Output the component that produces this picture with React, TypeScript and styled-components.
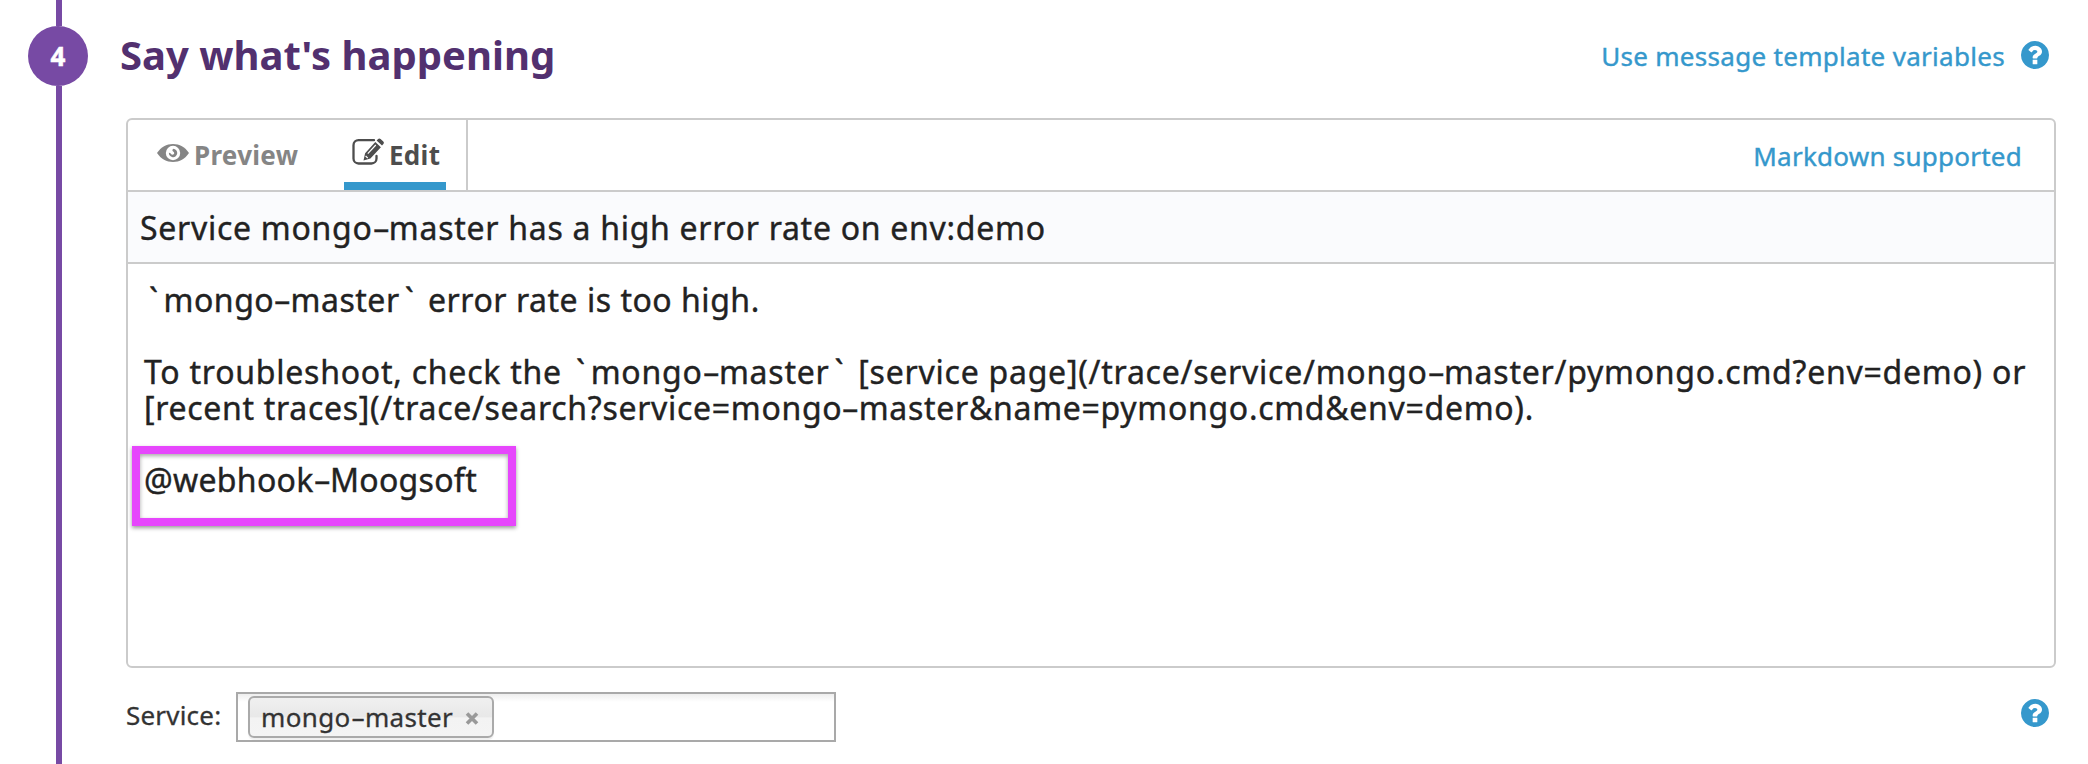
import React from "react";
import styled, { createGlobalStyle } from "styled-components";

const Global = createGlobalStyle`
  * { box-sizing: border-box; }
  body { margin: 0; background: #fff; font-family: "Noto Sans", "Open Sans", sans-serif; }
`;

const Page = styled.main`
  display: flex;
  height: 764px;
  overflow: hidden;
  background: #fff;
`;

const Rail = styled.aside`
  flex: 0 0 126px;
  display: flex;
  flex-direction: column;
  align-items: center;
  padding-right: 10px;
`;

const RailLine = styled.div<{ $height?: number }>`
  width: 6px;
  height: ${(p) => (p.$height ? `${p.$height}px` : "auto")};
  flex: ${(p) => (p.$height ? "none" : "1")};
  margin-left: 2px;
  background: #774aa4;
`;

const StepBadge = styled.div`
  flex: none;
  width: 60px;
  height: 60px;
  border-radius: 50%;
  background: #774aa4;
  color: #fff;
  font-size: 26px;
  font-weight: 700;
  -webkit-text-stroke: 0.5px;
  line-height: 61px;
  text-align: center;
`;

const Content = styled.section`
  flex: none;
  width: 1930px;
  display: flex;
  flex-direction: column;
`;

const Header = styled.header`
  height: 118px;
  display: flex;
  align-items: flex-start;
  justify-content: space-between;
  padding: 26px 7px 0 0;
`;

const Heading = styled.h2`
  margin: 0 0 0 -6px;
  color: #52306f;
  font-size: 40px;
  font-weight: 700;
  line-height: 58px;
  white-space: nowrap;
`;

const HeaderLink = styled.div`
  display: flex;
  align-items: flex-start;
  gap: 16px;
  padding-top: 15px;
`;

const Link = styled.a<{ $spacing: number; $lineHeight: number }>`
  color: #3598cc;
  font-size: 26px;
  letter-spacing: ${(p) => p.$spacing}px;
  line-height: ${(p) => p.$lineHeight}px;
  -webkit-text-stroke: 0.4px;
  white-space: nowrap;
`;

const HelpSvg = styled.svg`
  flex: none;
  display: block;
  width: 28px;
  height: 28px;
  fill: #3598cc;
`;

const Editor = styled.div`
  height: 550px;
  border: 2px solid #cbcbcb;
  border-radius: 6px;
  display: flex;
  flex-direction: column;
  overflow: hidden;
`;

const TabBar = styled.div`
  flex: none;
  height: 72px;
  display: flex;
  justify-content: space-between;
  border-bottom: 2px solid #cbcbcb;
  padding-right: 32px;
`;

const Tabs = styled.div`
  display: flex;
  border-right: 2px solid #cbcbcb;
  width: 340px;
  padding-left: 21px;
`;

const Tab = styled.div<{ $active?: boolean }>`
  display: flex;
  align-items: flex-start;
  width: ${(p) => (p.$active ? 102 : 152)}px;
  margin-left: ${(p) => (p.$active ? 43 : 0)}px;
  padding-left: 8px;
  border-bottom: 8px solid ${(p) => (p.$active ? "#3598cc" : "transparent")};
  color: ${(p) => (p.$active ? "#4d4d4d" : "#858585")};
  font-size: 26px;
  font-weight: 700;
  letter-spacing: 0.3px;
  line-height: 70px;
  white-space: nowrap;
`;

const TabIcon = styled.svg<{ $top: number; $gap: number }>`
  flex: none;
  display: block;
  margin: ${(p) => p.$top}px ${(p) => p.$gap}px 0 0;
`;

const Title = styled.div`
  flex: none;
  height: 72px;
  padding-left: 12px;
  border-bottom: 2px solid #cbcbcb;
  background: #fafbfd;
  color: #222;
  font-size: 32px;
  line-height: 72px;
  letter-spacing: 0.72px;
  -webkit-text-stroke: 0.4px;
  white-space: nowrap;
`;

const Body = styled.div`
  position: relative;
  flex: 1;
  padding: 18px 16px;
  color: #222;
  font-size: 32px;
  line-height: 36px;
  -webkit-text-stroke: 0.4px;
`;

const Line = styled.div<{ $spacing: number }>`
  height: 36px;
  letter-spacing: ${(p) => p.$spacing}px;
  white-space: pre;
`;

const Tick = styled.span`
  padding: 0 5px 0 5px;
`;

const Dash = styled.span`
  display: inline-block;
  letter-spacing: 0;
  margin: 0 3px;
  transform: scaleX(1.7);
  line-height: 1;
`;

const Highlight = styled.div`
  position: absolute;
  left: 4px;
  top: 182px;
  width: 384px;
  height: 80px;
  border: 8px solid #e646fc;
  box-shadow: 0 2px 4px rgba(0, 0, 0, 0.4), inset 0 2px 4px rgba(0, 0, 0, 0.35);
`;

const ServiceRow = styled.div`
  display: flex;
  align-items: flex-start;
  padding: 24px 7px 0 0;
`;

const Label = styled.label`
  width: 110px;
  color: #333;
  font-size: 26px;
  line-height: 46px;
  letter-spacing: 0.2px;
  -webkit-text-stroke: 0.3px;
`;

const TokenInput = styled.div`
  width: 600px;
  height: 50px;
  padding: 2px 10px;
  border: 2px solid #a9a9a9;
  background: linear-gradient(#eee, #fff 8px);
`;

const Token = styled.div`
  display: flex;
  width: 246px;
  height: 42px;
  padding-left: 11px;
  border: 2px solid #aaa;
  border-radius: 6px;
  background: linear-gradient(#f0f0f0, #e8e8e8 50%, #f3f3f3 52%, #f4f4f4);
  box-shadow: 0 2px 1px rgba(0, 0, 0, 0.06);
  color: #333;
  font-size: 26px;
  line-height: 38px;
  letter-spacing: 0.35px;
  -webkit-text-stroke: 0.3px;
  white-space: nowrap;
`;

const Remove = styled.svg`
  margin: 14px 0 0 12px;
`;

const HelpSlot = styled.div`
  margin: 7px 0 0 auto;
`;

const Help = () => (
  <HelpSvg viewBox="128 128 1536 1536">
    <path d="M1024 1376v-192q0-14-9-23t-23-9h-192q-14 0-23 9t-9 23v192q0 14 9 23t23 9h192q14 0 23-9t9-23zm256-672q0-88-55.5-163t-138.5-116-170-41q-243 0-371 213-15 24 8 42l132 100q7 6 19 6 16 0 25-12 53-68 86-92 34-24 86-24 48 0 85.5 26t37.5 59q0 38-20 61t-68 45q-63 28-115.5 86.5t-52.5 125.5v36q0 14 9 23t23 9h192q14 0 23-9t9-23q0-19 21.5-49.5t54.5-49.5q32-18 49-28.5t46-35 44.5-48 28-60.5 12.5-81zm384 192q0 209-103 385.5t-279.5 279.5-385.5 103-385.5-103-279.5-279.5-103-385.5 103-385.5 279.5-279.5 385.5-103 385.5 103 279.5 279.5 103 385.5z" />
  </HelpSvg>
);

/* Widens hyphens and backticks, which are broad in the editor's typeface. */
const Source = ({ text }: { text: string }) => (
  <>
    {text.split(/([-`])/).map((part, i) =>
      part === "-" ? <Dash key={i}>-</Dash> : part === "`" ? <Tick key={i}>`</Tick> : part
    )}
  </>
);

const message = [
  { text: "`mongo-master` error rate is too high.", spacing: 0.52 },
  { text: "", spacing: 0 },
  {
    text: "To troubleshoot, check the `mongo-master` [service page](/trace/service/mongo-master/pymongo.cmd?env=demo) or",
    spacing: 0.76,
  },
  { text: "[recent traces](/trace/search?service=mongo-master&name=pymongo.cmd&env=demo).", spacing: 0.7 },
  { text: "", spacing: 0 },
  { text: "@webhook-Moogsoft", spacing: 0.3 },
];

export default function App() {
  return (
    <Page>
      <Global />
      <Rail>
        <RailLine $height={26} />
        <StepBadge>4</StepBadge>
        <RailLine />
      </Rail>
      <Content>
        <Header>
          <Heading>Say what's happening</Heading>
          <HeaderLink>
            <Link $spacing={0.3} $lineHeight={31}>Use message template variables</Link>
            <Help />
          </HeaderLink>
        </Header>
        <Editor>
          <TabBar>
            <Tabs>
              <Tab>
                <TabIcon $top={24} $gap={5} width="32" height="18" viewBox="0 0 32 18">
                  <path d="M0 9C4 3 9.500 0 16 0s12 3 16 9c-4 6-9.500 9-16 9S4 15 0 9z" fill="#858585" />
                  <circle cx="16" cy="9" r="7.200" fill="#fff" />
                  <path d="M16.300 4.800a4.200 4.200 0 1 1-4.400 3.600c.9.700 2 .6 2.200 1.500.4 1.300 3.200.9 3.100-.8-.1-1.300-1.300-1.500-1.700-2.300-.3-.7.100-1.500.8-2z" fill="#858585" />
                </TabIcon>
                Preview
              </Tab>
              <Tab $active>
                <TabIcon $top={18} $gap={5} width="32" height="27" viewBox="0 0 32 27">
                  <path d="M22 2.200H6.500A5 5 0 0 0 1.500 7.200v13.300a5 5 0 0 0 5 5h13a5 5 0 0 0 5-5V18" fill="none" stroke="#4d4d4d" strokeWidth="2.300" strokeLinecap="round" />
                  <path d="M11.500 22.500l1.600-7.200L23.300 4l5.600 5.200-10.500 11.300zM24.600 2.600l1.500-1.600c.8-.8 1.700-.7 2.500 0l2.700 2.500c.8.800.8 1.700.1 2.500l-1.400 1.600z" fill="#4d4d4d" />
                  <path d="M15.800 15.700l8-8.700M13.600 18l2.200 2.200" stroke="#fff" strokeWidth="1.200" />
                </TabIcon>
                Edit
              </Tab>
            </Tabs>
            <Link $spacing={0.25} $lineHeight={73}>Markdown supported</Link>
          </TabBar>
          <Title><Source text="Service mongo-master has a high error rate on env:demo" /></Title>
          <Body>
            {message.map((line, i) => (
              <Line key={i} $spacing={line.spacing}><Source text={line.text} /></Line>
            ))}
            <Highlight />
          </Body>
        </Editor>
        <ServiceRow>
          <Label>Service:</Label>
          <TokenInput>
            <Token>
              <span><Source text="mongo-master" /></span>
              <Remove width="14" height="13" viewBox="0 0 14 13">
                <path d="M2 1.500l10 10M12 1.500l-10 10" stroke="#999" strokeWidth="3.600" />
              </Remove>
            </Token>
          </TokenInput>
          <HelpSlot><Help /></HelpSlot>
        </ServiceRow>
      </Content>
    </Page>
  );
}
